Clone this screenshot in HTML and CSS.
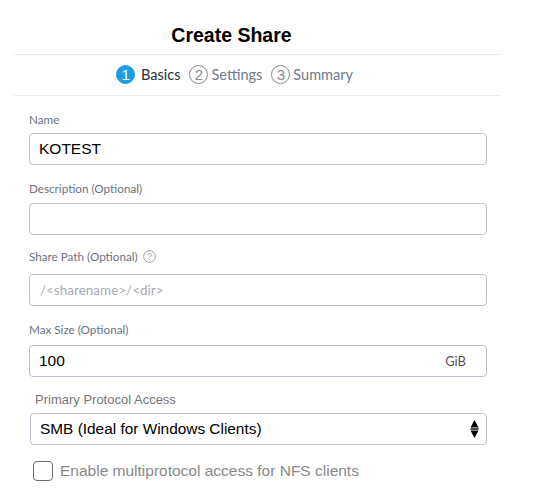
FILE: index.html
```html
<!DOCTYPE html>
<html>
<head>
<meta charset="utf-8">
<link rel="stylesheet" href="styles.css">
</head>
<body>
<div class="modal">
  <div class="header">
    <h1 class="title">Create Share</h1>
  </div>
  <div class="steps">
    <div class="step active"><span class="num">1</span><span class="step-label">Basics</span></div>
    <div class="step"><span class="num">2</span><span class="step-label">Settings</span></div>
    <div class="step"><span class="num">3</span><span class="step-label">Summary</span></div>
  </div>
  <form class="form">
    <div class="field f-name">
      <label class="label">Name</label>
      <div class="input"><span class="value">KOTEST</span></div>
    </div>
    <div class="field f-desc">
      <label class="label">Description (Optional)</label>
      <div class="input"></div>
    </div>
    <div class="field f-path">
      <label class="label">Share Path (Optional)
        <svg class="help" width="13" height="13" viewBox="0 0 13 13"><circle cx="6.5" cy="6.5" r="5.8" fill="none" stroke="#9aa0aa" stroke-width="1"/><path d="M4.8 5.1a1.7 1.7 0 1 1 2.4 1.5c-.5.3-.7.6-.7 1.2" fill="none" stroke="#9aa0aa" stroke-width="1"/><circle cx="6.5" cy="9.6" r=".6" fill="#9aa0aa"/></svg>
      </label>
      <div class="input"><span class="placeholder">/&lt;sharename&gt;/&lt;dir&gt;</span></div>
    </div>
    <div class="field f-size">
      <label class="label">Max Size (Optional)</label>
      <div class="input"><span class="value">100</span><span class="unit">GiB</span></div>
    </div>
    <div class="field f-proto">
      <label class="label plain">Primary Protocol Access</label>
      <div class="input select"><span class="value">SMB (Ideal for Windows Clients)</span>
        <svg class="arrows" width="9" height="20" viewBox="0 0 9 20"><path d="M4.5 1 L8.5 8.5 L0.5 8.5 Z" fill="#000"/><rect x="0.5" y="9.3" width="8" height="1.4" fill="#000"/><path d="M0.5 11.5 L8.5 11.5 L4.5 19 Z" fill="#000"/></svg>
      </div>
    </div>
    <div class="check-row">
      <span class="checkbox"></span>
      <span class="check-label">Enable multiprotocol access for NFS clients</span>
    </div>
  </form>
</div>
</body>
</html>
```
FILE: styles.css
```css
* { box-sizing: border-box; }
body {
  margin: 0;
  background: #fff;
  font-family: "Liberation Sans", Arial, sans-serif;
}
.modal {
  width: 535px;
}
.header {
  margin-left: 14px;
  width: 487px;
  padding-right: 52px;
  padding-top: 23px;
  padding-bottom: 7px;
  border-bottom: 1px solid #ececee;
}
.title {
  margin: 0;
  text-align: center;
  font-size: 19.5px;
  line-height: 24px;
  font-weight: bold;
  color: #000;
}
.steps {
  margin-left: 14px;
  width: 487px;
  padding-right: 46px;
  height: 41px;
  border-bottom: 1px solid #ececee;
  display: flex;
  justify-content: center;
  align-items: center;
  gap: 9px;
  padding-bottom: 2px;
}
.step {
  display: flex;
  align-items: center;
  gap: 3px;
  font-family: "Lato", "Liberation Sans", sans-serif;
  font-size: 14.5px;
  color: #6f7a8a;
}
.step .num {
  width: 19px;
  height: 19px;
  border-radius: 50%;
  border: 1px solid #8a8a8a;
  color: #8a8a8a;
  font-family: "Liberation Sans", sans-serif;
  font-size: 15px;
  line-height: 17px;
  text-align: center;
}
.step.active .num {
  background: #1b9fe2;
  border-color: #1b9fe2;
  color: #fff;
}
.step.active { color: #2b2f36; gap: 6px; }
.form {
  padding: 15px 0 0 29px;
  width: 487px;
  margin: 0;
}
.field { margin-bottom: 14px; }
.f-name { margin-bottom: 15px; }
.f-desc { margin-bottom: 13px; }
.f-path { margin-bottom: 15px; }
.f-proto { margin-bottom: 16px; }
.label {
  display: flex;
  align-items: center;
  gap: 5px;
  height: 16px;
  margin-bottom: 6px;
  font-family: "Lato", "Liberation Sans", sans-serif;
  font-size: 11.7px;
  color: #6b7380;
}
.f-desc .label { margin-bottom: 7px; }
.f-path .label { margin-bottom: 10px; }
.f-size .label { margin-bottom: 8px; }
.label.plain {
  font-family: "Liberation Sans", Arial, sans-serif;
  font-size: 13px;
  color: #777;
  padding-left: 6px;
}
.help { flex: none; }
.input {
  height: 32px;
  border: 1px solid #bcc0cc;
  border-radius: 4px;
  display: flex;
  align-items: center;
  padding: 0 20px 0 9px;
  background: #fff;
}
.value {
  font-size: 15.5px;
  color: #000;
}
.placeholder {
  font-family: "Lato", "Liberation Sans", sans-serif;
  font-size: 13.5px;
  color: #a8acb4;
  padding-left: 1px;
}
.unit {
  margin-left: auto;
  font-family: "Lato", "Liberation Sans", sans-serif;
  font-size: 13px;
  color: #555;
}
.select {
  margin-left: 1px;
  padding-right: 7px;
}
.select .value { font-size: 15.4px; }
.select .arrows { margin-left: auto; }
.check-row {
  display: flex;
  align-items: center;
  gap: 7px;
  padding-left: 4px;
}
.checkbox {
  width: 20px;
  height: 20px;
  border: 1px solid #6e6e6e;
  border-radius: 4px;
}
.check-label {
  font-size: 15.5px;
  color: #8a8a8a;
}
```
